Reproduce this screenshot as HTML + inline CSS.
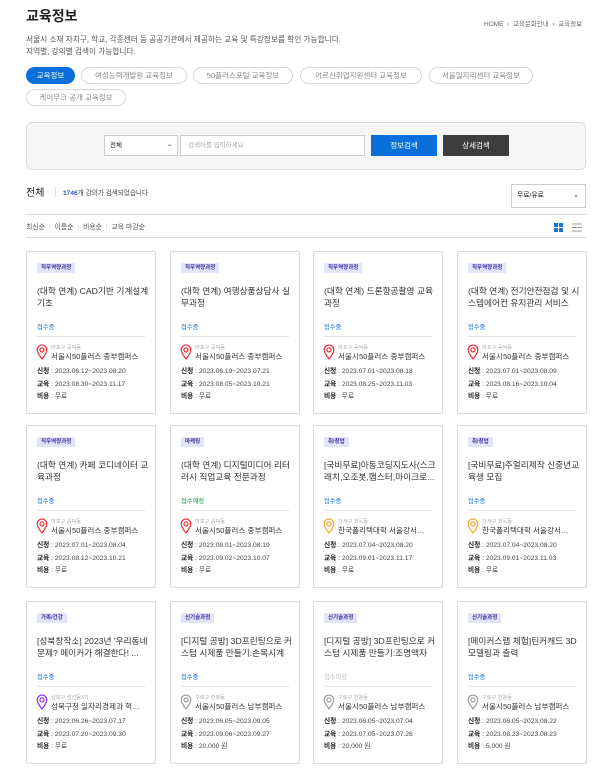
<!DOCTYPE html>
<html><head><meta charset="utf-8"><style>
*{margin:0;padding:0;box-sizing:border-box}
body{width:612px;height:772px;background:#fff;font-family:"Liberation Sans","Noto Sans CJK KR",sans-serif;color:#222;position:relative;overflow:hidden}
.a{position:absolute;white-space:nowrap}
.tab{position:absolute;height:17px;border:1px solid #d6d6d6;border-radius:9px;font-size:7.5px;color:#888;text-align:center;line-height:15px}
.card{position:absolute;width:130px;height:163px;border:1px solid #d9d9d9;border-radius:2px;background:#fff}
.bd{position:absolute;left:10px;top:11px;height:10px;padding:0 4px;background:#e3e3fb;color:#3b2f9e;font-size:5.5px;line-height:10px;font-weight:bold;border-radius:1px}
.tt{position:absolute;left:10px;top:33px;width:112px;font-size:8.7px;line-height:12px;color:#333;height:24px;overflow:hidden}
.st{position:absolute;left:10px;top:70px;font-size:6.3px;color:#1a73e8}
.hr{position:absolute;left:10px;right:10px;top:84px;border-top:1px solid #e3e3e3}
.pin{position:absolute;left:9px;top:92px}
.gu{position:absolute;left:24px;top:92px;font-size:5.2px;color:#aaa}
.pl{position:absolute;left:24px;top:99px;font-size:7.6px;color:#333;width:91px;overflow:hidden;text-overflow:ellipsis;white-space:nowrap}
.ln{position:absolute;left:10px;font-size:6.7px;color:#444;white-space:nowrap}
.ln b{color:#222}
</style></head><body>
<div class="a" style="left:26px;top:6px;font-size:14px;font-weight:bold;color:#222">교육정보</div>
<div class="a" style="left:484px;top:18px;font-size:6.5px;color:#666">HOME &nbsp;›&nbsp; 교육문화안내 &nbsp;›&nbsp; 교육정보</div>
<div class="a" style="left:26px;top:34px;font-size:7.7px;color:#555;line-height:12px">서울시 소재 자치구, 학교, 각종센터 등 공공기관에서 제공하는 교육 및 특강정보를 확인 가능합니다.<br>지역별, 강의별 검색이 가능합니다.</div>
<div class="tab" style="left:26px;top:67px;width:49px;background:#0a6fd8;border-color:#0a6fd8;color:#fff">교육정보</div>
<div class="tab" style="left:81px;top:67px;width:106px">여성능력개발원 교육정보</div>
<div class="tab" style="left:193px;top:67px;width:100px">50플러스포털 교육정보</div>
<div class="tab" style="left:300px;top:67px;width:122px">어르신취업지원센터 교육정보</div>
<div class="tab" style="left:429px;top:67px;width:104px">서울일자리센터 교육정보</div>
<div class="tab" style="left:26px;top:89px;width:100px">케이무크 공개 교육정보</div>
<div class="a" style="left:26px;top:122px;width:560px;height:48px;background:#f6f6f6;border:1px solid #dcdcdc;border-radius:6px"></div>
<div class="a" style="left:104px;top:135px;width:74px;height:21px;background:#fff;border:1px solid #ccc;font-size:6.5px;line-height:19px;padding-left:5px">전체<span style="position:absolute;right:5px;font-size:6px">⌄</span></div>
<div class="a" style="left:180px;top:135px;width:185px;height:21px;background:#fff;border:1px solid #ccc;font-size:6.5px;line-height:19px;padding-left:7px;color:#aaa">검색어를 입력하세요</div>
<div class="a" style="left:371px;top:135px;width:66px;height:21px;background:#0a6fd8;color:#fff;font-size:7.5px;line-height:21px;text-align:center">정보검색</div>
<div class="a" style="left:443px;top:135px;width:66px;height:21px;background:#3d3d3d;color:#fff;font-size:7.5px;line-height:21px;text-align:center">상세검색</div>
<div class="a" style="left:26px;top:184px;font-size:10px;color:#222">전체</div>
<div class="a" style="left:55px;top:187px;height:10px;border-left:1px solid #ddd"></div>
<div class="a" style="left:63px;top:187px;font-size:6.6px;color:#444"><b style="color:#2a56c6">1746</b>개 강의가 검색되었습니다</div>
<div class="a" style="left:511px;top:184px;width:75px;height:24px;border:1px solid #ccc;font-size:6.8px;line-height:22px;padding-left:5px">무료/유료<span style="position:absolute;right:6px;font-size:7px">⌄</span></div>
<div class="a" style="left:26px;top:214px;width:560px;border-top:1px solid #ddd"></div>
<div class="a" style="left:26px;top:221px;font-size:6.9px;color:#555">최신순 <span style="color:#ccc">&nbsp;|&nbsp;</span> 이름순 <span style="color:#ccc">&nbsp;|&nbsp;</span> 비용순 <span style="color:#ccc">&nbsp;|&nbsp;</span> 교육 마감순</div>
<svg class="a" style="left:554px;top:223px" width="30" height="10"><rect x="0" y="0" width="4" height="4" fill="#1a6fd8"/><rect x="5" y="0" width="4" height="4" fill="#1a6fd8"/><rect x="0" y="5" width="4" height="4" fill="#1a6fd8"/><rect x="5" y="5" width="4" height="4" fill="#1a6fd8"/><path d="M18 1H28M18 4.5H28M18 8H28" stroke="#999" stroke-width="1"/></svg>
<div class="a" style="left:26px;top:237px;width:560px;border-top:1px solid #ddd"></div>

<div id="cards"></div>
<script>
const X=[26,170,313,457],Y=[251,425,601];
const pin=c=>`<svg class="pin" width="12" height="16" viewBox="0 0 11 15"><path d="M5.5 14C5.5 14 1 8.5 1 5.5A4.5 4.5 0 0 1 10 5.5C10 8.5 5.5 14 5.5 14Z" fill="none" stroke="${c}" stroke-width="1.1"/><circle cx="5.5" cy="5.5" r="1.9" fill="none" stroke="${c}" stroke-width="1.1"/></svg>`;
const D=[
["직무역량과정","(대학 연계) CAD기반 기계설계 기초","접수중","#1a73e8","#e8262d","마포구 공덕동","서울시50플러스 중부캠퍼스","2023.06.12~2023.08.20","2023.08.30~2023.11.17","무료"],
["직무역량과정","(대학 연계) 여행상품상담사 실무과정","접수중","#1a73e8","#e8262d","마포구 공덕동","서울시50플러스 중부캠퍼스","2023.06.19~2023.07.21","2023.08.05~2023.10.21","무료"],
["직무역량과정","(대학 연계) 드론항공촬영 교육과정","접수중","#1a73e8","#e8262d","마포구 공덕동","서울시50플러스 중부캠퍼스","2023.07.01~2023.08.18","2023.08.25~2023.11.03","무료"],
["직무역량과정","(대학 연계) 전기안전점검 및 시스템에어컨 유지관리 서비스","접수중","#1a73e8","#e8262d","마포구 공덕동","서울시50플러스 중부캠퍼스","2023.07.01~2023.08.09","2023.08.16~2023.10.04","무료"],
["직무역량과정","(대학 연계) 카페 코디네이터 교육과정","접수중","#1a73e8","#e8262d","마포구 공덕동","서울시50플러스 중부캠퍼스","2023.07.01~2023.08.04","2023.08.12~2023.10.21","무료"],
["마케팅","(대학 연계) 디지털미디어 리터러시 직업교육 전문과정","접수예정","#1aa34a","#e8262d","마포구 공덕동","서울시50플러스 중부캠퍼스","2023.08.01~2023.08.19","2023.09.02~2023.10.07","무료"],
["취/창업","[국비무료]아동코딩지도사(스크래치,오조봇,햄스터,마이크로...","접수중","#1a73e8","#f5a623","강서구 화곡동","한국폴리텍대학 서울강서캠퍼스","2023.07.04~2023.08.20","2023.09.01~2023.11.17","무료"],
["취/창업","[국비무료]주얼리제작 신중년교육생 모집","접수중","#1a73e8","#f5a623","강서구 화곡동","한국폴리텍대학 서울강서캠퍼스","2023.07.04~2023.08.20","2023.09.01~2023.11.03","무료"],
["가족/건강","[성북창작소] 2023년 '우리동네 문제? 메이커가 해결한다! ...","접수중","#1a73e8","#8a2be2","성북구 삼선동5가","성북구청 일자리경제과 혁신기업지원","2023.06.26~2023.07.17","2023.07.20~2023.09.30","무료"],
["신기술과정","[디지털 공방] 3D프린팅으로 커스텀 시제품 만들기:손목시계","접수중","#1a73e8","#999","구로구 천왕동","서울시50플러스 남부캠퍼스","2023.06.05~2023.09.05","2023.09.06~2023.09.27","20,000 원"],
["신기술과정","[디지털 공방] 3D프린팅으로 커스텀 시제품 만들기:조명액자","접수마감","#bbb","#999","구로구 천왕동","서울시50플러스 남부캠퍼스","2023.06.05~2023.07.04","2023.07.05~2023.07.26","20,000 원"],
["신기술과정","[메이커스랩 체험]틴커캐드 3D 모델링과 출력","접수중","#1a73e8","#999","구로구 천왕동","서울시50플러스 남부캠퍼스","2023.06.05~2023.08.22","2023.08.23~2023.08.23","5,000 원"]];
let h="";
D.forEach((d,i)=>{const x=X[i%4],y=Y[Math.floor(i/4)];
h+=`<div class="card" style="left:${x}px;top:${y}px"><div class="bd">${d[0]}</div><div class="tt">${d[1]}</div><div class="st" style="color:${d[3]}">${d[2]}</div><div class="hr"></div>${pin(d[4])}<div class="gu">${d[5]}</div><div class="pl">${d[6]}</div><div class="ln" style="top:113px"><b>신청</b> : ${d[7]}</div><div class="ln" style="top:126px"><b>교육</b> : ${d[8]}</div><div class="ln" style="top:138px"><b>비용</b> : ${d[9]}</div></div>`;});
document.getElementById("cards").innerHTML=h;
</script>
</body></html>
